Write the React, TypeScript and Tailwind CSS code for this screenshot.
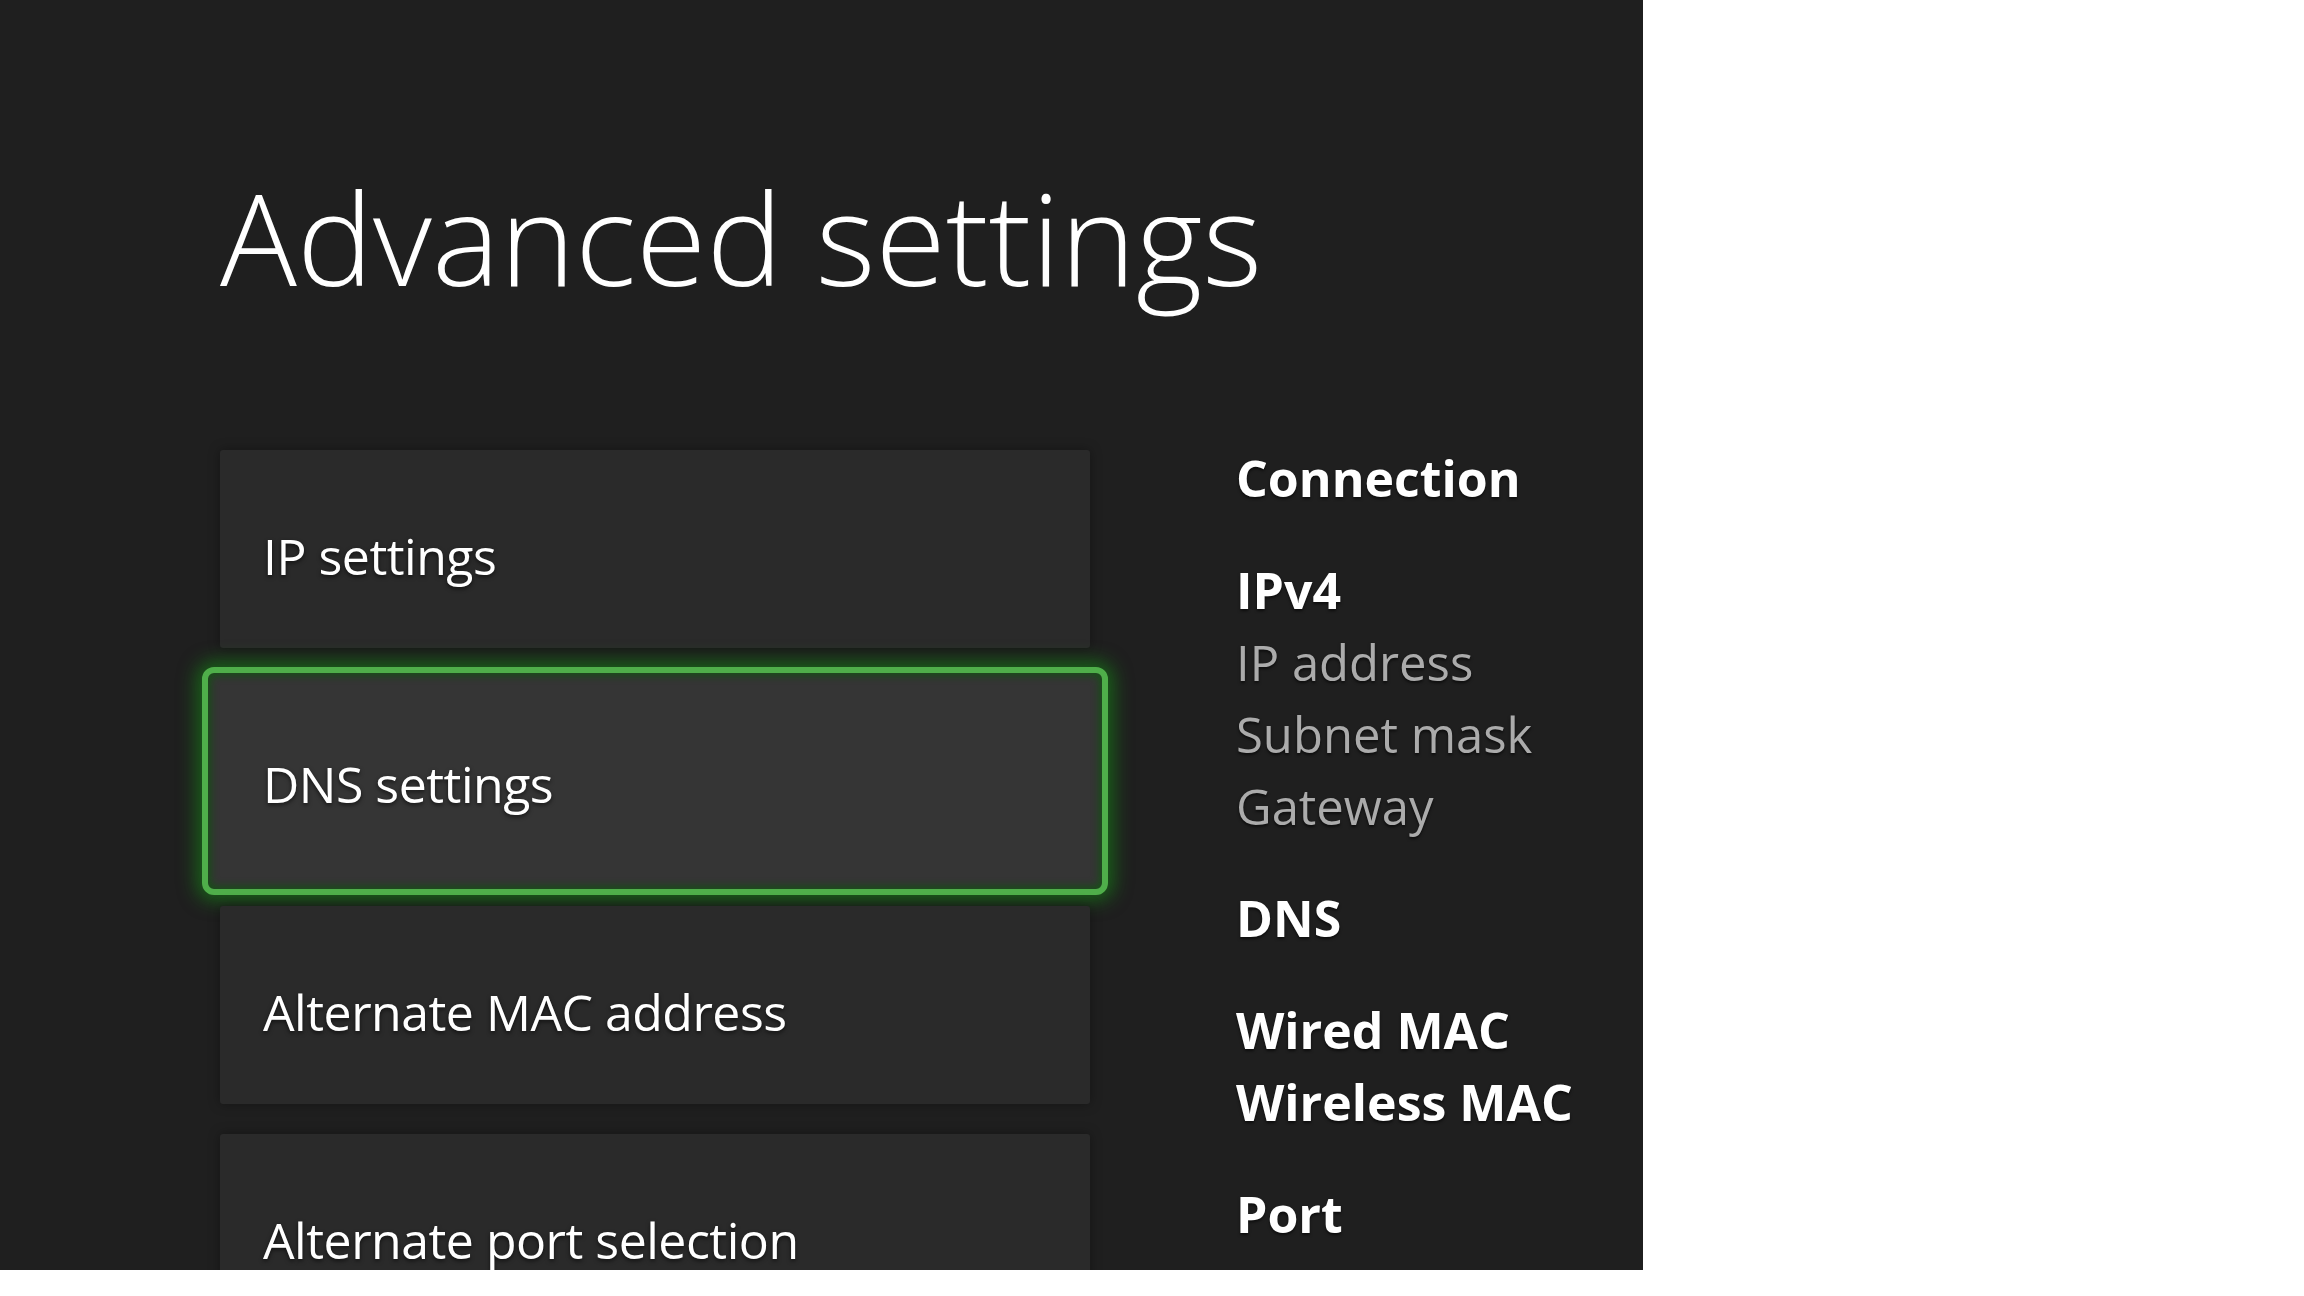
const listItems = [
  { label: 'IP settings' },
  { label: 'DNS settings', focused: true },
  { label: 'Alternate MAC address' },
  { label: 'Alternate port selection' },
]

const infoGroups: { title: string; bold?: string[]; lines?: string[] }[] = [
  { title: 'Connection' },
  { title: 'IPv4', lines: ['IP address', 'Subnet mask', 'Gateway'] },
  { title: 'DNS' },
  { title: 'Wired MAC', bold: ['Wireless MAC'] },
  { title: 'Port' },
]

function SettingCard({ label, focused }: { label: string; focused?: boolean }) {
  return (
    <div className="relative flex h-[198px] w-[870px] flex-shrink-0 items-center pl-[43px] pt-[14px]">
      {focused ? (
        <div className="absolute -left-[18px] -right-[18px] -top-[11px] -bottom-[19px] rounded-[12px] border-[6px] border-[#4fae4a] bg-[#353535] shadow-[0_0_18px_6px_rgba(20,150,20,0.55),inset_0_0_8px_2px_rgba(10,90,10,0.8)]" />
      ) : (
        <div className="absolute inset-0 rounded-[3px] bg-[#2a2a2a] shadow-[0_0_12px_rgba(0,0,0,0.35)]" />
      )}
      <span className="relative text-[50px] leading-[50px] tracking-[-0.5px] text-white [text-shadow:0_2px_4px_rgba(0,0,0,0.6)]">
        {label}
      </span>
    </div>
  )
}

export default function App() {
  return (
    <div className="min-h-screen w-full bg-white font-['Open_Sans',sans-serif]">
      <div className="flex h-[1270px] w-[1643px] flex-col overflow-hidden bg-[#1f1f1f] pl-[220px] pt-[173px]">
        <h1 className="text-[128px] font-light leading-[128px] text-white">
          Advanced settings
        </h1>

        <div className="mt-[141px] flex items-start gap-[146px]">
          {/* Option cards */}
          <div className="flex flex-col gap-[30px] pt-[8px]">
            {listItems.map((item) => (
              <SettingCard key={item.label} label={item.label} focused={item.focused} />
            ))}
          </div>

          {/* Network details */}
          <div className="flex flex-col gap-[40px] leading-[72px] [text-shadow:0_2px_3px_rgba(0,0,0,0.6)]">
            {infoGroups.map((group) => (
              <div key={group.title} className="flex flex-col">
                <span className="text-[50px] font-bold text-white">{group.title}</span>
                {group.bold?.map((line) => (
                  <span key={line} className="text-[50px] font-bold text-white">
                    {line}
                  </span>
                ))}
                {group.lines?.map((line) => (
                  <span key={line} className="text-[49px] text-[#ababab]">
                    {line}
                  </span>
                ))}
              </div>
            ))}
          </div>
        </div>
      </div>
    </div>
  )
}
